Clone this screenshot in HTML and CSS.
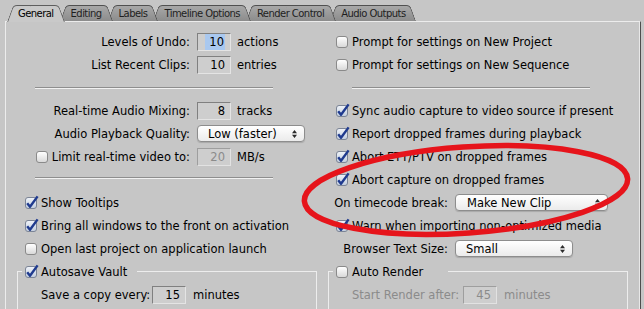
FILE: index.html
```html
<!DOCTYPE html>
<html lang="en">
<head>
    <meta charset="UTF-8">
    <meta name="viewport" content="width=device-width, initial-scale=1.0">
    <title>User Preferences</title>

    <link rel="stylesheet" href="styles.css">
</head>
<body>
    <div class="tabs">
        <div class="tab active">General</div>
        <div class="tab">Editing</div>
        <div class="tab">Labels</div>
        <div class="tab">Timeline Options</div>
        <div class="tab">Render Control</div>
        <div class="tab">Audio Outputs</div>
    </div>

    <div class="panel">
        <div class="col col-left">
            <div class="row">
                <span class="lbl">Levels of Undo:</span>
                <span class="num"><span class="hilite">10</span></span>
                <span class="unit">actions</span>
            </div>
            <div class="row">
                <span class="lbl">List Recent Clips:</span>
                <span class="num">10</span>
                <span class="unit">entries</span>
            </div>
            <div class="sep"></div>
            <div class="row">
                <span class="lbl">Real-time Audio Mixing:</span>
                <span class="num">8</span>
                <span class="unit">tracks</span>
            </div>
            <div class="row">
                <span class="lbl">Audio Playback Quality:</span>
                <span class="select w-quality">Low (faster)
                    <svg class="arrows" width="5" height="8" viewBox="0 0 5 8"><path d="M0 3.2L2.5 0L5 3.2ZM0 4.8L2.5 8L5 4.8Z"/></svg>
                </span>
            </div>
            <div class="row">
                <span class="lbl"><span class="cb"></span>Limit real-time video to:</span>
                <span class="num dis">20</span>
                <span class="unit">MB/s</span>
            </div>
            <div class="sep sep-b"></div>
            <div class="row check">
                <span class="cb on"><svg width="16" height="16" viewBox="0 0 16 16"><path d="M3.2 9.2L6 12.8L13.6 2.4"/></svg></span>Show Tooltips
            </div>
            <div class="row check">
                <span class="cb on"><svg width="16" height="16" viewBox="0 0 16 16"><path d="M3.2 9.2L6 12.8L13.6 2.4"/></svg></span>Bring all windows to the front on activation
            </div>
            <div class="row check">
                <span class="cb"></span>Open last project on application launch
            </div>
            <fieldset class="group">
                <legend class="legend-vault"><span class="check-in"><span class="cb on"><svg width="16" height="16" viewBox="0 0 16 16"><path d="M3.2 9.2L6 12.8L13.6 2.4"/></svg></span>Autosave Vault</span></legend>
                <div class="row inset">
                    <span class="lbl">Save a copy every:</span>
                    <span class="num">15</span>
                    <span class="unit">minutes</span>
                </div>
            </fieldset>
        </div>

        <div class="col col-right">
            <div class="row check">
                <span class="cb"></span>Prompt for settings on New Project
            </div>
            <div class="row check">
                <span class="cb"></span>Prompt for settings on New Sequence
            </div>
            <div class="sep"></div>
            <div class="row check">
                <span class="cb on"><svg width="16" height="16" viewBox="0 0 16 16"><path d="M3.2 9.2L6 12.8L13.6 2.4"/></svg></span>Sync audio capture to video source if present
            </div>
            <div class="row check">
                <span class="cb on"><svg width="16" height="16" viewBox="0 0 16 16"><path d="M3.2 9.2L6 12.8L13.6 2.4"/></svg></span>Report dropped frames during playback
            </div>
            <div class="row check">
                <span class="cb on"><svg width="16" height="16" viewBox="0 0 16 16"><path d="M3.2 9.2L6 12.8L13.6 2.4"/></svg></span>Abort ETT/PTV on dropped frames
            </div>
            <div class="row check">
                <span class="cb on"><svg width="16" height="16" viewBox="0 0 16 16"><path d="M3.2 9.2L6 12.8L13.6 2.4"/></svg></span>Abort capture on dropped frames
            </div>
            <div class="row">
                <span class="lbl">On timecode break:</span>
                <span class="select w-clip">Make New Clip
                    <svg class="arrows" width="5" height="8" viewBox="0 0 5 8"><path d="M0 3.2L2.5 0L5 3.2ZM0 4.8L2.5 8L5 4.8Z"/></svg>
                </span>
            </div>
            <div class="row check">
                <span class="cb on"><svg width="16" height="16" viewBox="0 0 16 16"><path d="M3.2 9.2L6 12.8L13.6 2.4"/></svg></span>Warn when importing non-optimized media
            </div>
            <div class="row">
                <span class="lbl">Browser Text Size:</span>
                <span class="select w-size">Small
                    <svg class="arrows" width="5" height="8" viewBox="0 0 5 8"><path d="M0 3.2L2.5 0L5 3.2ZM0 4.8L2.5 8L5 4.8Z"/></svg>
                </span>
            </div>
            <fieldset class="group">
                <legend class="legend-render"><span class="check-in"><span class="cb"></span>Auto Render</span></legend>
                <div class="row inset">
                    <span class="lbl dis">Start Render after:</span>
                    <span class="num dis">45</span>
                    <span class="unit dis">minutes</span>
                </div>
            </fieldset>
        </div>
    </div>

    <!-- hand-drawn highlight over the dropped frames options -->
    <svg class="mark" width="644" height="309">
        <ellipse cx="466" cy="190" rx="162" ry="43" transform="rotate(-4 466 190)"/>
    </svg>
</body>
</html>
```

FILE: styles.css
```css
body {
    margin: 0;
    height: 309px;
    overflow: hidden;
    background: #c6c6c6;
    font-family: "DejaVu Sans", sans-serif;
    font-size: 11.5px;
    color: #000;
}

/* tabs */
.tabs {
    display: flex;
    height: 16px;
    padding: 5px 0 0 7px;
}
.tab {
    position: relative;
    height: 16px;
    line-height: 17px;
    padding: 0 11px;
    margin-right: -5px;
    font-size: 10px;
    letter-spacing: -0.55px;
    color: #1e1e1e;
    white-space: nowrap;
}
.tab::before,
.tab::after {
    content: "";
    position: absolute;
    top: 0;
    bottom: 0;
    z-index: -1;
    background: linear-gradient(#a8a8a8, #8c8c8c);
    border-top: 1px solid #505050;
    transform-origin: bottom;
}
.tab::before {
    left: 0;
    right: 50%;
    border-left: 1px solid #505050;
    border-top-left-radius: 4px;
    transform: skewX(-20deg);
}
.tab::after {
    left: 50%;
    right: 0;
    border-right: 1px solid #505050;
    border-top-right-radius: 4px;
    transform: skewX(20deg);
}
.tab:nth-child(2) { z-index: 5; }
.tab:nth-child(3) { z-index: 4; }
.tab:nth-child(4) { z-index: 3; }
.tab:nth-child(5) { z-index: 2; }
.tab:nth-child(6) { z-index: 1; }
.tab.active {
    z-index: 7;
    height: 17px;
    color: #000;
}
.tab.active::before,
.tab.active::after {
    background: #c9c9c9;
    border-color: #5e5e5e;
}

/* panel */
.panel {
    display: grid;
    grid-template-columns: 322px 1fr;
    width: 634px;
    height: 279px;
    margin-left: 5px;
    padding-top: 8px;
    border-top: 1px solid #ececec;
    border-left: 1px solid #ececec;
    border-right: 1px solid #4e4e4e;
    box-shadow: inset -1px 0 #e8e8e8;
}
.col {
    display: flex;
    flex-direction: column;
}
.row {
    display: flex;
    align-items: center;
    flex-shrink: 0;
    height: 23px;
    white-space: nowrap;
}
.lbl {
    display: flex;
    align-items: center;
    justify-content: flex-end;
    flex-shrink: 0;
    margin-right: 7px;
}
.col-left .lbl { width: 184px; }
.col-right .lbl { width: 120px; }

.check { padding-left: 19px; }
.col-right .check { padding-left: 8px; }

.unit { margin-left: 6px; }
.dis { color: #8b8b8b; }

/* number fields */
.num {
    box-sizing: border-box;
    width: 34px;
    height: 18px;
    padding-right: 5px;
    line-height: 16px;
    text-align: right;
    background: #cecece;
    border: 1px solid;
    border-color: #808080 #e4e4e4 #e4e4e4 #808080;
}
.num.dis { border-color: #9e9e9e #e2e2e2 #e2e2e2 #9e9e9e; }
.hilite {
    display: inline-block;
    padding: 0 1px 0 4px;
    background: #a9c8ef;
}

/* popups */
.select {
    box-sizing: border-box;
    display: flex;
    align-items: center;
    justify-content: space-between;
    height: 17px;
    padding: 0 7px 0 10px;
    border: 1px solid #8d8d8d;
    border-radius: 4px;
    background: linear-gradient(#ffffff, #ebebeb);
    box-shadow: 0 1px 1px rgba(0, 0, 0, 0.15);
}
.arrows { fill: #2b2b2b; }
.w-quality { width: 108px; }
.w-clip { width: 153px; padding-left: 11px; }
.w-size { width: 118px; }

/* checkboxes */
.cb {
    position: relative;
    flex-shrink: 0;
    box-sizing: border-box;
    width: 12px;
    height: 12px;
    margin-right: 4px;
    border: 1px solid #8a8a8a;
    border-radius: 3px;
    background: linear-gradient(#ffffff, #d9d9d9);
}
.cb.on {
    background: linear-gradient(#eef2f8, #c4cfdf);
    border-color: #7b8496;
}
.cb svg {
    position: absolute;
    left: -2px;
    top: -4px;
}
.cb path {
    fill: none;
    stroke: #1f3a8e;
    stroke-width: 2.4;
    stroke-linejoin: round;
}

/* separators */
.sep {
    flex-shrink: 0;
    width: 238px;
    height: 0;
    margin: 11px 0 10px 29px;
    border-top: 1px solid #8e8e8e;
    border-bottom: 1px solid #f1f1f1;
}
.sep-b { margin: 9px 0 12px 29px; }
.col-right .sep { margin-left: 24px; }

/* group boxes, cut off by the window bottom */
.group {
    box-sizing: border-box;
    width: 300px;
    min-width: 0;
    height: 49px;
    margin: 0;
    padding: 0;
    border: 1px solid #ededed;
    border-bottom: 0;
}
.col-left .group { margin-left: 11px; }
.group legend {
    height: 23px;
    margin-left: 4px;
    padding: 0 10px 0 3px;
}
.group .legend-render { padding-right: 25px; }
.check-in {
    display: flex;
    align-items: center;
    height: 23px;
}
.inset { padding-left: 23px; }
.inset .lbl {
    width: 107px;
    justify-content: flex-start;
    margin-right: 4px;
}
.inset .unit { margin-left: 7px; }

/* red marker */
.mark {
    position: absolute;
    left: 0;
    top: 0;
    pointer-events: none;
}
.mark ellipse {
    fill: none;
    stroke: #e6141b;
    stroke-width: 5.5;
}
```
